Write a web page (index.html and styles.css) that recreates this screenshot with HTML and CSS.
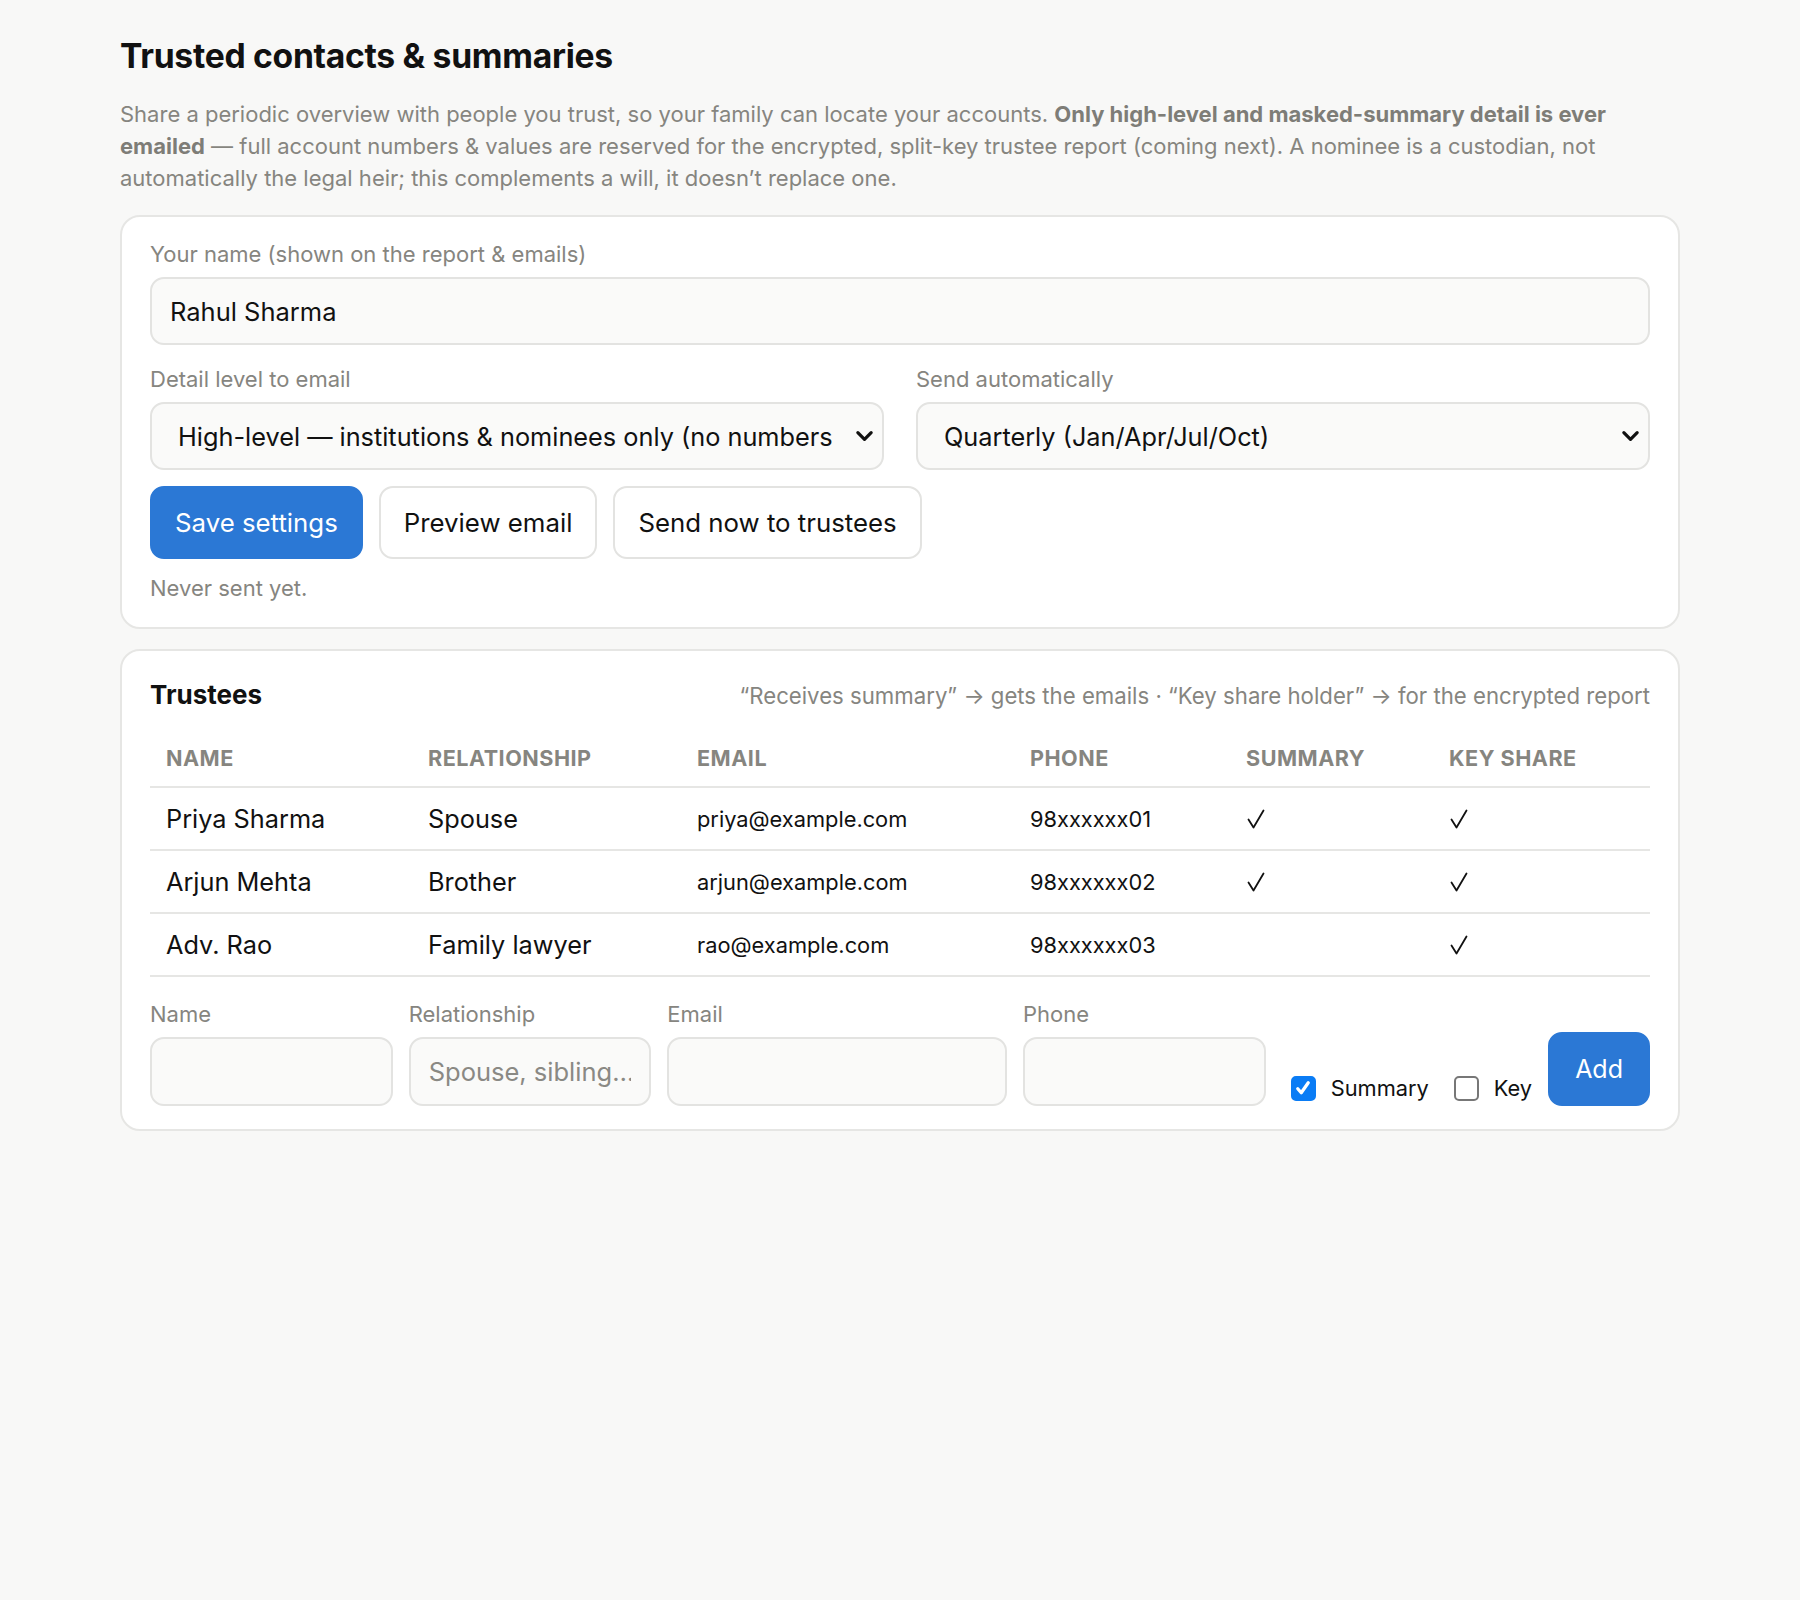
FILE: index.html
```html
<!DOCTYPE html>
<html lang="en">
<head>
<meta charset="utf-8">
<title>Trusted contacts &amp; summaries</title>
<link rel="stylesheet" href="styles.css">
</head>
<body>
<main class="page">
  <h1 class="title">Trusted contacts &amp; summaries</h1>
  <p class="intro">Share a periodic overview with people you trust, so your family can locate your accounts. <strong>Only high-level and masked-summary detail is ever emailed</strong> — full account numbers &amp; values are reserved for the encrypted, split-key trustee report (coming next). A nominee is a custodian, not automatically the legal heir; this complements a will, it doesn’t replace one.</p>

  <section class="card settings">
    <div class="field">
      <label class="label">Your name (shown on the report &amp; emails)</label>
      <input class="input" type="text" value="Rahul Sharma">
    </div>
    <div class="two-col">
      <div class="field">
        <label class="label">Detail level to email</label>
        <div class="select">
          <span class="select-text">High-level — institutions &amp; nominees only (no numbers)</span>
          <svg class="chev" viewBox="0 0 20 12" width="19" height="12"><path d="M3 2.5 L10 9.5 L17 2.5" fill="none" stroke="#111" stroke-width="3.4" stroke-linecap="round" stroke-linejoin="round"/></svg>
        </div>
      </div>
      <div class="field">
        <label class="label">Send automatically</label>
        <div class="select">
          <span class="select-text">Quarterly (Jan/Apr/Jul/Oct)</span>
          <svg class="chev" viewBox="0 0 20 12" width="19" height="12"><path d="M3 2.5 L10 9.5 L17 2.5" fill="none" stroke="#111" stroke-width="3.4" stroke-linecap="round" stroke-linejoin="round"/></svg>
        </div>
      </div>
    </div>
    <div class="actions">
      <button class="btn btn-primary">Save settings</button>
      <button class="btn">Preview email</button>
      <button class="btn">Send now to trustees</button>
    </div>
    <p class="status">Never sent yet.</p>
  </section>

  <section class="card trustees">
    <div class="card-head">
      <h2 class="card-title">Trustees</h2>
      <span class="hint">“Receives summary” → gets the emails · “Key share holder” → for the encrypted report</span>
    </div>
    <table class="table">
      <colgroup>
        <col class="c-name"><col class="c-rel"><col class="c-email"><col class="c-phone"><col class="c-sum"><col class="c-key">
      </colgroup>
      <thead>
        <tr><th>Name</th><th>Relationship</th><th>Email</th><th>Phone</th><th>Summary</th><th>Key share</th></tr>
      </thead>
      <tbody>
        <tr>
          <td class="big">Priya Sharma</td><td class="big">Spouse</td><td>priya@example.com</td><td>98xxxxxx01</td>
          <td><svg class="tick" viewBox="0 0 20 20" width="20" height="20"><path d="M2.5 10.5 L7.5 18.5 L17.5 1.5" fill="none" stroke="#111" stroke-width="1.8" stroke-linecap="round" stroke-linejoin="round"/></svg></td>
          <td><svg class="tick" viewBox="0 0 20 20" width="20" height="20"><path d="M2.5 10.5 L7.5 18.5 L17.5 1.5" fill="none" stroke="#111" stroke-width="1.8" stroke-linecap="round" stroke-linejoin="round"/></svg></td>
        </tr>
        <tr>
          <td class="big">Arjun Mehta</td><td class="big">Brother</td><td>arjun@example.com</td><td>98xxxxxx02</td>
          <td><svg class="tick" viewBox="0 0 20 20" width="20" height="20"><path d="M2.5 10.5 L7.5 18.5 L17.5 1.5" fill="none" stroke="#111" stroke-width="1.8" stroke-linecap="round" stroke-linejoin="round"/></svg></td>
          <td><svg class="tick" viewBox="0 0 20 20" width="20" height="20"><path d="M2.5 10.5 L7.5 18.5 L17.5 1.5" fill="none" stroke="#111" stroke-width="1.8" stroke-linecap="round" stroke-linejoin="round"/></svg></td>
        </tr>
        <tr>
          <td class="big">Adv. Rao</td><td class="big">Family lawyer</td><td>rao@example.com</td><td>98xxxxxx03</td>
          <td></td>
          <td><svg class="tick" viewBox="0 0 20 20" width="20" height="20"><path d="M2.5 10.5 L7.5 18.5 L17.5 1.5" fill="none" stroke="#111" stroke-width="1.8" stroke-linecap="round" stroke-linejoin="round"/></svg></td>
        </tr>
      </tbody>
    </table>
    <div class="add-row">
      <div class="field">
        <label class="label">Name</label>
        <input class="input input-add" type="text">
      </div>
      <div class="field">
        <label class="label">Relationship</label>
        <input class="input input-add" type="text" placeholder="Spouse, sibling…">
      </div>
      <div class="field">
        <label class="label">Email</label>
        <input class="input input-add" type="text">
      </div>
      <div class="field">
        <label class="label">Phone</label>
        <input class="input input-add" type="text">
      </div>
      <label class="check"><span class="box box-on"><svg viewBox="0 0 16 16" width="16" height="16"><path d="M3.8 8.6 L6.6 11.8 L12.2 3.8" fill="none" stroke="#fff" stroke-width="2.6" stroke-linecap="round" stroke-linejoin="round"/></svg></span>Summary</label>
      <label class="check"><span class="box"></span>Key</label>
      <button class="btn btn-primary btn-add">Add</button>
    </div>
  </section>
</main>
</body>
</html>
```

FILE: styles.css
```css
* { box-sizing: border-box; }

html, body {
  margin: 0;
  padding: 0;
  background: #f8f8f7;
}

body {
  font-family: Inter, "Noto Sans", "Liberation Sans", sans-serif;
  color: #111;
}

.page {
  max-width: 1560px;
  margin: 0 auto;
  padding: 36px 0 40px;
}

.title {
  margin: 0 0 22px;
  font-size: 33.7px;
  font-weight: 700;
  letter-spacing: -0.3px;
  line-height: 40px;
}

.intro {
  margin: 0 0 21px;
  font-size: 22px;
  line-height: 32px;
  color: #86857f;
}

.intro strong {
  font-weight: 700;
  color: #7e7d77;
}

.card {
  background: #fff;
  border: 2px solid #e6e6e4;
  border-radius: 20px;
  padding: 24px 28px 26px;
}

.settings {
  display: flex;
  flex-direction: column;
  gap: 16px;
}

.trustees {
  margin-top: 20px;
  padding-top: 28px;
  padding-bottom: 23px;
}

.field {
  display: flex;
  flex-direction: column;
  gap: 10px;
  min-width: 0;
}

.label {
  font-size: 22px;
  line-height: 26px;
  color: #86857f;
}

.input {
  height: 68px;
  width: 100%;
  border: 2px solid #e3e3e1;
  border-radius: 14px;
  background: #fafaf9;
  padding: 0 18px;
  font-family: inherit;
  font-size: 25.5px;
  color: #111;
  outline: none;
}

.input-add {
  height: 69px;
}

.input::placeholder {
  color: #8a8984;
}

.two-col {
  display: grid;
  grid-template-columns: 1fr 1fr;
  gap: 32px;
  margin-top: 5px;
}

.select {
  height: 68px;
  border: 2px solid #e3e3e1;
  border-radius: 14px;
  background: #fafaf9;
  padding: 0 8px 0 26px;
  display: flex;
  align-items: center;
  gap: 22px;
  font-size: 25.3px;
  color: #111;
}

.select-text {
  flex: 1;
  white-space: nowrap;
  overflow: hidden;
}

.chev {
  flex: none;
}

.actions {
  display: flex;
  gap: 16px;
}

.btn {
  height: 73px;
  padding: 0 23px;
  border: 2px solid #e3e3e1;
  border-radius: 14px;
  background: #fff;
  font-family: inherit;
  font-size: 25.8px;
  color: #111;
}

.btn-primary {
  background: #2b78d5;
  border-color: #2b78d5;
  color: #fff;
}

.status {
  margin: 0;
  font-size: 22px;
  line-height: 26px;
  color: #86857f;
}

.card-head {
  display: flex;
  justify-content: space-between;
  align-items: center;
  margin-bottom: 34px;
}

.card-title {
  margin: 0;
  font-size: 26px;
  font-weight: 700;
  line-height: 32px;
}

.hint {
  font-size: 22.2px;
  color: #86857f;
}

.table {
  width: 100%;
  border-collapse: collapse;
  table-layout: fixed;
}

.c-name { width: 262px; }
.c-rel { width: 269px; }
.c-email { width: 333px; }
.c-phone { width: 216px; }
.c-sum { width: 203px; }
.c-key { width: auto; }

.table th {
  text-align: left;
  font-size: 21.6px;
  line-height: 26px;
  font-weight: 700;
  text-transform: uppercase;
  letter-spacing: 0.5px;
  color: #86857f;
  padding: 0 16px 15px;
  border-bottom: 2px solid #e6e6e4;
}

.table td {
  height: 63px;
  padding: 0 16px;
  font-size: 21.8px;
  color: #111;
  border-bottom: 2px solid #e6e6e4;
  vertical-align: middle;
}

.table td.big {
  font-size: 25.3px;
}

.tick {
  display: block;
}

.add-row {
  display: grid;
  grid-template-columns: 1fr 1fr 1.4fr 1fr auto auto auto;
  gap: 16px;
  align-items: end;
  margin-top: 24px;
}

.check {
  display: flex;
  align-items: center;
  gap: 15px;
  font-size: 21.8px;
  color: #111;
  height: 36px;
  margin-left: 9px;
}

.box {
  flex: none;
  width: 25px;
  height: 25px;
  border: 2px solid #777;
  border-radius: 5px;
  background: #fff;
  display: flex;
  align-items: center;
  justify-content: center;
}

.box-on {
  background: #0a7cf5;
  border-color: #0a7cf5;
}

.box svg {
  width: 20px;
  height: 20px;
}

.btn-add {
  height: 74px;
  padding: 0 25px;
  font-size: 25px;
}
```
